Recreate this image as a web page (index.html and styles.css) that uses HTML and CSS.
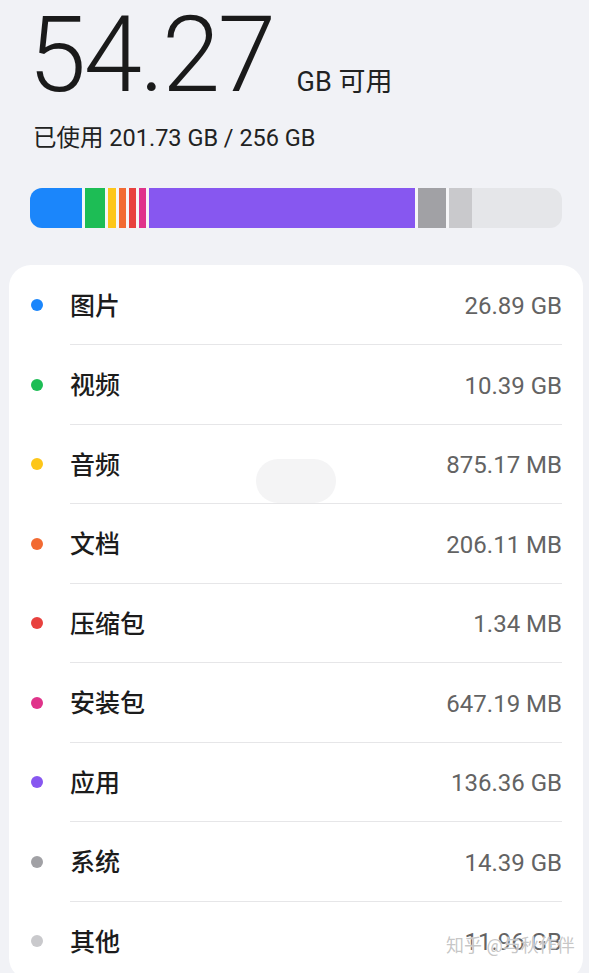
FILE: index.html
```html
<!DOCTYPE html>
<html lang="zh-CN">
<head>
    <meta charset="UTF-8">
    <meta name="viewport" content="width=device-width, initial-scale=1.0">
    <title>存储</title>
    <link rel="stylesheet" href="styles.css">
</head>
<body>

<div class="summary">
    <div class="free">
        <span class="free-num">54.27</span>
        <span class="free-unit">GB 可用</span>
    </div>
    <div class="used">已使用 201.73 GB / 256 GB</div>
</div>

<div class="bar">
    <span class="seg seg-pic" style="width:55px"></span>
    <span class="seg seg-video" style="width:23px"></span>
    <span class="seg seg-audio" style="width:11px"></span>
    <span class="seg seg-doc" style="width:10px"></span>
    <span class="seg seg-zip" style="width:10px"></span>
    <span class="seg seg-apk" style="width:10px"></span>
    <span class="seg seg-app" style="width:268.7px"></span>
    <span class="seg seg-sys" style="width:31.3px"></span>
    <span class="seg seg-other last" style="width:22.7px"></span>
</div>

<ul class="card">
    <li class="row"><span class="dot seg-pic"></span><div class="row-main"><span class="label">图片</span><span class="size">26.89 GB</span></div></li>
    <li class="row"><span class="dot seg-video"></span><div class="row-main"><span class="label">视频</span><span class="size">10.39 GB</span></div></li>
    <li class="row"><span class="dot seg-audio"></span><div class="row-main"><span class="label">音频</span><span class="size">875.17 MB</span></div></li>
    <li class="row"><span class="dot seg-doc"></span><div class="row-main"><span class="label">文档</span><span class="size">206.11 MB</span></div></li>
    <li class="row"><span class="dot seg-zip"></span><div class="row-main"><span class="label">压缩包</span><span class="size">1.34 MB</span></div></li>
    <li class="row"><span class="dot seg-apk"></span><div class="row-main"><span class="label">安装包</span><span class="size">647.19 MB</span></div></li>
    <li class="row"><span class="dot seg-app"></span><div class="row-main"><span class="label">应用</span><span class="size">136.36 GB</span></div></li>
    <li class="row"><span class="dot seg-sys"></span><div class="row-main"><span class="label">系统</span><span class="size">14.39 GB</span></div></li>
    <li class="row"><span class="dot seg-other"></span><div class="row-main"><span class="label">其他</span><span class="size">11.96 GB</span></div></li>
</ul>

<div class="float-pill"></div>
<div class="watermark">知乎 @与秋作伴</div>

</body>
</html>
```

FILE: styles.css
```css
body {
    font-family: Roboto, "Noto Sans CJK SC", sans-serif;
    background-color: #f1f2f6;
    margin: 0;
    height: 973px;
    overflow: hidden;
    position: relative;
    color: #1a1a1a;
}
.summary {
    padding: 9px 0 0 28px;
}
.free {
    display: flex;
    align-items: baseline;
}
.free-num {
    font-size: 105px;
    font-weight: 300;
    line-height: 0.9;
    letter-spacing: -2.5px;
}
.free-unit {
    font-size: 27px;
    line-height: 1;
    margin-left: 23px;
    color: #222;
}
.used {
    font-size: 23.5px;
    line-height: 30px;
    margin: 19px 0 0 5px;
    color: #222;
}
.bar {
    display: flex;
    height: 40px;
    margin: 35px 27px 0 30px;
    background: #e5e6e9;
    border-radius: 12px;
    overflow: hidden;
}
.seg {
    box-sizing: border-box;
    height: 100%;
    border-right: 3px solid #f6f6f8;
}
.seg.last {
    border-right: none;
}
.seg-pic { background: #1b86fb; }
.seg-video { background: #1dbd55; }
.seg-audio { background: #fdc619; }
.seg-doc { background: #f26a32; }
.seg-zip { background: #e8413e; }
.seg-apk { background: #e0338a; }
.seg-app { background: #8757f0; }
.seg-sys { background: #a1a1a5; }
.seg-other { background: #c9c9cc; }

.card {
    list-style: none;
    margin: 37px 6px 0 9px;
    padding: 1px 21px 0 22px;
    background: white;
    border-radius: 22px;
}
.row {
    display: flex;
    align-items: stretch;
}
.dot {
    width: 12px;
    height: 12px;
    border-radius: 50%;
    align-self: center;
    margin-right: 27px;
    flex-shrink: 0;
}
.row-main {
    flex: 1;
    display: flex;
    align-items: center;
    justify-content: space-between;
    height: 78.5px;
    border-bottom: 1px solid #e6e6e8;
}
.row:last-child .row-main {
    border-bottom: none;
}
.label {
    font-size: 25px;
    font-weight: 500;
    line-height: 1;
    padding-top: 3px;
    color: #1c1c1c;
}
.size {
    font-size: 24px;
    line-height: 1;
    padding-top: 3px;
    color: #636363;
}
.float-pill {
    position: absolute;
    left: 256px;
    top: 459px;
    width: 80px;
    height: 44px;
    border-radius: 22px;
    background: #f4f4f5;
}
.watermark {
    position: absolute;
    left: 446px;
    top: 931px;
    font-size: 18px;
    color: rgba(150, 150, 150, 0.55);
    text-shadow: 0 0 1px #fff, 0 0 1px #fff;
    white-space: nowrap;
}
```
